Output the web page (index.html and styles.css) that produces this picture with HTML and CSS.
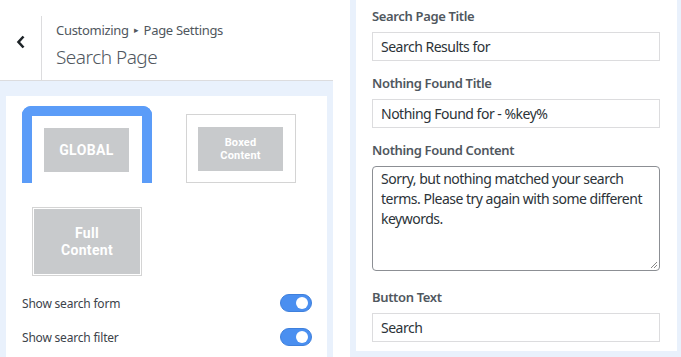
FILE: index.html
```html
<!DOCTYPE html>
<html>
<head>
<meta charset="utf-8">
<link rel="stylesheet" href="styles.css">
</head>
<body>
<div class="page">
  <div class="left">
    <div class="header">
      <div class="back">
        <svg width="10" height="14" viewBox="0 0 10 14"><path d="M7.5 1.5 L2.5 7 L7.5 12.5" fill="none" stroke="#1d2327" stroke-width="2.6"/></svg>
      </div>
      <div class="titles">
        <div class="crumb">Customizing <span class="tri">&#9656;</span> Page Settings</div>
        <div class="title">Search Page</div>
      </div>
    </div>
    <div class="section">
      <div class="card">
        <div class="layouts">
          <div class="slot selected"><div class="thumb"><div class="inner big">GLOBAL</div></div></div>
          <div class="slot"><div class="thumb"><div class="inner small">Boxed<br>Content</div></div></div>
          <div class="slot"><div class="thumb full"><div class="inner fill">Full<br>Content</div></div></div>
        </div>
        <div class="toggle-row"><span>Show search form</span><span class="toggle"></span></div>
        <div class="toggle-row"><span>Show search filter</span><span class="toggle"></span></div>
      </div>
    </div>
  </div>
  <div class="right">
    <div class="rcard">
      <div class="label">Search Page Title</div>
      <div class="input">Search Results for</div>
      <div class="label">Nothing Found Title</div>
      <div class="input">Nothing Found for - %key%</div>
      <div class="label">Nothing Found Content</div>
      <div class="textarea">Sorry, but nothing matched your search terms. Please try again with some different keywords.
        <svg class="grip" width="8" height="8" viewBox="0 0 8 8"><path d="M7 1 L1 7 M7 4 L4 7" stroke="#888" stroke-width="1"/></svg>
      </div>
      <div class="label">Button Text</div>
      <div class="input">Search</div>
    </div>
  </div>
</div>
</body>
</html>
```
FILE: styles.css
```css
* { box-sizing: border-box; }
html, body { margin: 0; padding: 0; background: #fff; }
body { font-family: "Noto Sans", "Open Sans", sans-serif; overflow: hidden; }
.page { display: flex; width: 681px; height: 357px; }
.left { width: 333px; display: flex; flex-direction: column; }
.header { height: 81px; display: flex; border-bottom: 1px solid #dcdcde; background: #fff; }
.back { width: 41px; display: flex; align-items: center; justify-content: center; padding-top: 4px; }
.titles { border-left: 1px solid #dcdcde; margin-top: 16px; padding-left: 14px; flex: 1; }
.crumb { font-size: 13px; color: #50575e; line-height: 16px; margin-top: 6px; letter-spacing: -0.3px; }
.tri { font-size: 9px; position: relative; top: -2px; margin: 0 2px; }
.title { font-size: 19px; font-weight: 300; color: #50575e; line-height: 26px; margin-top: 4px; letter-spacing: -0.5px; }
.section { flex: 1; background: #e9f1fc; padding: 15px 6px 0 6px; }
.card { background: #fff; height: 100%; padding: 10px 15px 0 16px; }
.layouts { display: grid; grid-template-columns: 130px 130px; column-gap: 24px; row-gap: 16px; }
.slot { height: 77px; padding: 8px 10px 0; }
.thumb { width: 110px; height: 69px; border: 1px solid #d4d4d4; padding: 12px 11px; }
.thumb.full { padding: 1px; }
.slot.selected { border: 10px solid #5b9cf8; border-bottom: 0; border-radius: 9px 9px 0 0; padding: 0; }
.slot.selected .thumb { border: 0; width: 110px; height: 68px; padding: 12px; }
.inner { background: #c8cacc; width: 85px; height: 44px; color: #fff; font-family: Roboto, sans-serif; font-weight: 700; display: flex; align-items: center; justify-content: center; text-align: center; }
.inner.big { font-size: 14px; letter-spacing: 0.4px; }
.inner.small { font-size: 11px; line-height: 13px; letter-spacing: 0.2px; }
.inner.fill { width: 100%; height: 100%; font-size: 14px; line-height: 17px; letter-spacing: 0.3px; }
.toggle-row { display: flex; justify-content: space-between; align-items: center; height: 34px; font-size: 12px; color: #3c434a; letter-spacing: -0.2px; }
.layouts + .toggle-row { margin-top: 10px; }
.toggle { width: 32px; height: 18px; border-radius: 9px; background: #4a8ff0; position: relative; border: 1px solid #3f80dc; }
.toggle::after { content: ""; position: absolute; right: 3px; top: 2px; width: 12px; height: 12px; border-radius: 50%; background: #fff; }
.right { margin-left: 17px; flex: 1; background: #e9f1fc; padding: 0 4px 6px 6px; }
.rcard { background: #fff; height: 100%; padding: 7px 17px 10px 16px; }
.label { font-size: 13px; font-weight: 600; color: #50575e; line-height: 18px; margin-bottom: 7px; letter-spacing: -0.35px; }
.input { height: 29px; border: 1px solid #dcdcde; font-size: 14px; color: #2c3338; padding: 0 8px; display: flex; align-items: center; margin-bottom: 13px; letter-spacing: -0.5px; }
.textarea { height: 105px; border: 1px solid #8c8f94; border-radius: 4px; font-size: 14px; color: #2c3338; line-height: 20px; padding: 2px 8px; margin-bottom: 17px; position: relative; letter-spacing: -0.5px; }
.grip { position: absolute; right: 1px; bottom: 1px; }
```
